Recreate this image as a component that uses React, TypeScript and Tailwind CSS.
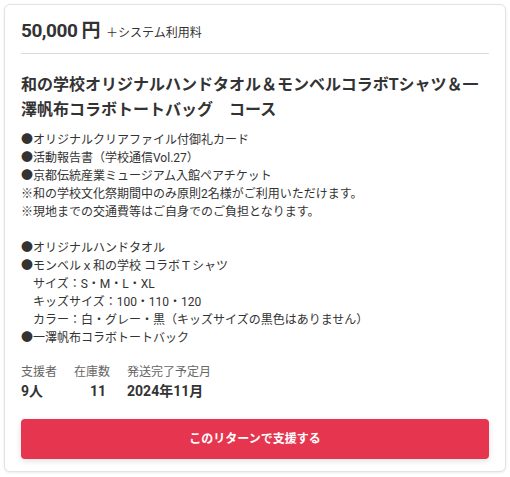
import React from "react";

const font = {
  fontFamily: 'Roboto, "Noto Sans CJK JP", sans-serif',
};

const lines1 = [
  "●オリジナルクリアファイル付御礼カード",
  "●活動報告書（学校通信Vol.27）",
  "●京都伝統産業ミュージアム入館ペアチケット",
  "※和の学校文化祭期間中のみ原則2名様がご利用いただけます。",
  "※現地までの交通費等はご自身でのご負担となります。",
];

const lines2 = [
  "●オリジナルハンドタオル",
  "●モンベルｘ和の学校 コラボＴシャツ",
  "　サイズ：S・M・L・XL",
  "　キッズサイズ：100・110・120",
  "　カラー：白・グレー・黒（キッズサイズの黒色はありません）",
  "●一澤帆布コラボトートバック",
];

export default function App() {
  return (
    <div className="min-h-screen bg-white pt-[4px] pl-[4px]" style={font}>
      <div className="w-[502px] h-[468px] rounded-md border border-[#e3e3e3] bg-white shadow-[0_1px_3px_rgba(0,0,0,0.08)] px-4 pt-4 text-[#333]">
        {/* price */}
        <div className="flex items-baseline gap-1 border-b border-[#dcdcdc] pb-3 h-[33px]">
          <span className="text-[19px] font-bold leading-[20px] tracking-tight">50,000 円</span>
          <span className="text-[12px] leading-[20px] ml-0.5">＋システム利用料</span>
        </div>

        {/* title */}
        <h2 className="mt-[18px] text-[16px] font-bold leading-[25px]">
          和の学校オリジナルハンドタオル＆モンベルコラボTシャツ＆一澤帆布コラボトートバッグ　コース
        </h2>

        {/* body */}
        <div className="mt-[9px] text-[12px] leading-[18px]">
          {lines1.map((l, i) => (
            <div key={i}>{l}</div>
          ))}
          <div className="h-[18px]" />
          {lines2.map((l, i) => (
            <div key={i}>{l}</div>
          ))}
        </div>

        {/* stats */}
        <div className="mt-[16px] flex gap-[17px]">
          <div className="flex flex-col">
            <span className="text-[12px] leading-[18px] text-[#666]">支援者</span>
            <span className="text-[14px] font-bold leading-[20px]">9人</span>
          </div>
          <div className="flex flex-col items-end">
            <span className="text-[12px] leading-[18px] text-[#666]">在庫数</span>
            <span className="text-[14px] font-bold leading-[20px] pr-[4px]">11</span>
          </div>
          <div className="flex flex-col">
            <span className="text-[12px] leading-[18px] text-[#666]">発送完了予定月</span>
            <span className="text-[14px] font-bold leading-[20px]">2024年11月</span>
          </div>
        </div>

        {/* button */}
        <button className="mt-[18px] w-full h-[40px] rounded-[4px] bg-[#e6364f] text-white text-[12px] font-bold shadow-[0_2px_6px_rgba(0,0,0,0.12)]">
          このリターンで支援する
        </button>
      </div>
    </div>
  );
}
